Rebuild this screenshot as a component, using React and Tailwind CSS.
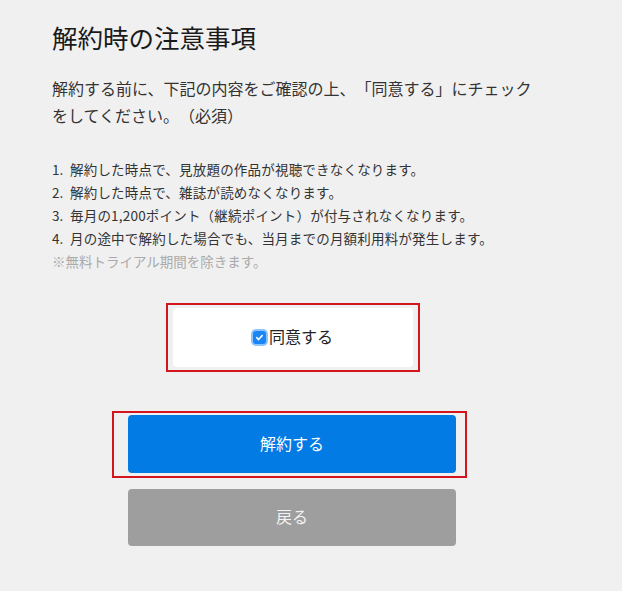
export default function App() {
  const items = [
    ['1.', '解約した時点で、見放題の作品が視聴できなくなります。'],
    ['2.', '解約した時点で、雑誌が読めなくなります。'],
    ['3.', '毎月の1,200ポイント（継続ポイント）が付与されなくなります。'],
    ['4.', '月の途中で解約した場合でも、当月までの月額利用料が発生します。'],
  ]

  return (
    <div
      className="min-h-[591px] w-full bg-[#f0f0f0] text-[#222] [text-spacing-trim:space-all]"
      style={{ fontFamily: '"Noto Sans CJK JP", "Noto Sans", sans-serif' }}
    >
      <div className="ml-[52px] flex w-[482px] flex-col pt-[19px]">
        <h1 className="text-[25.5px] font-normal leading-[36px] text-[#1a1a1a]">解約時の注意事項</h1>

        <p className="mt-[20px] w-[482px] text-[16px] leading-[27px] text-[#333]">
          解約する前に、下記の内容をご確認の上、「同意する」にチェックをしてください。（必須）
        </p>

        <div className="mt-[29px] text-[13.5px] leading-[23px] text-[#333]">
          {items.map(([num, text]) => (
            <p key={num} className="flex">
              <span className="w-[18px] shrink-0">{num}</span>
              <span className="tracking-[0.2px]">{text}</span>
            </p>
          ))}
          <p className="text-[#aaa]">※無料トライアル期間を除きます。</p>
        </div>

        <div className="mt-[30px] self-center border-2 border-[#d3161d] px-[5px] py-[3px]">
          <label className="flex h-[59px] w-[240px] items-center justify-center rounded-[4px] bg-white pb-[3px]">
            <span className="mr-[3px] mt-[2px] flex h-[13px] w-[13px] items-center justify-center rounded-[3px] bg-[#1a86f5] shadow-[0_0_0_2px_#8cc4fb]">
              <svg width="9" height="9" viewBox="0 0 10 10" fill="none">
                <path d="M2 5.2l2 2.1L8 2.8" stroke="white" strokeWidth="1.8" strokeLinecap="round" strokeLinejoin="round" />
              </svg>
            </span>
            <span className="text-[16px] leading-[24px] text-[#222]">同意する</span>
          </label>
        </div>

        <div className="ml-[60px] mt-[39px] self-start border-2 border-[#d3161d] pb-[3px] pl-[14px] pr-[9px] pt-[2px]">
          <button className="flex h-[58px] w-[328px] items-center justify-center rounded-[4px] bg-[#037be5] pb-[3px] text-[16px] text-white">
            解約する
          </button>
        </div>

        <button className="ml-[76px] mt-[11px] flex h-[57px] w-[328px] items-center justify-center rounded-[4px] bg-[#9e9e9e] pb-[3px] text-[16px] text-[#f2f2f2]">
          戻る
        </button>
      </div>
    </div>
  )
}
